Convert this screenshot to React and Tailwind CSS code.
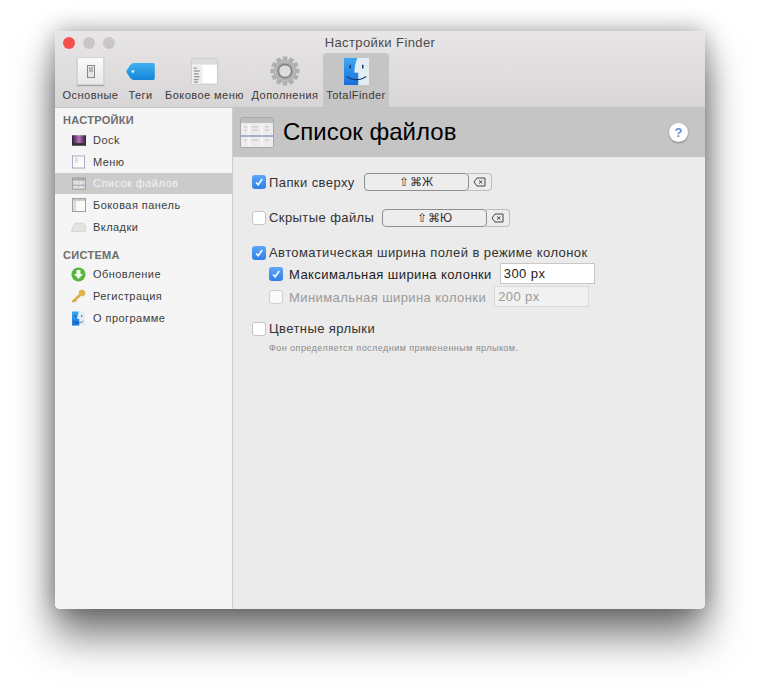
const FONT = "font-['Liberation_Sans',Arial,sans-serif]";

function Check({ on, dim }) {
  return (
    <span className={`flex h-[14px] w-[14px] shrink-0 items-center justify-center rounded-[3px] ${on ? "bg-gradient-to-b from-[#5ea6f7] to-[#2f7fe8]" : "border border-[#c4c4c4] bg-white"} ${dim ? "opacity-70" : ""}`}>
      {on && (
        <svg width="10" height="10" viewBox="0 0 10 10" fill="none">
          <path d="M2 5.400 4.200 7.800 8.200 2" stroke="white" strokeWidth="1.500" />
        </svg>
      )}
    </span>
  );
}

function Shortcut({ keys }) {
  return (
    <div className="flex h-[18px] w-[128px] text-[12px] text-[#333]">
      <div className="z-10 flex w-[105px] items-center justify-center rounded-[4px] border border-[#8f8f8f] bg-[#ededed]">{keys}</div>
      <div className="-ml-px flex flex-1 items-center justify-center rounded-r-[4px] border border-l-0 border-[#bdbdbd] bg-[#ededed]">
        <svg width="13" height="10" viewBox="0 0 13 10" fill="none" stroke="#444" strokeWidth="1">
          <path d="M4 1h8v8H4L1 5z" />
          <path d="M6 3.400 9.400 6.600M9.400 3.400 6 6.600" />
        </svg>
      </div>
    </div>
  );
}

function SwitchIcon() {
  return (
    <div className="flex h-[28px] w-[27px] items-center justify-center border border-[#d4d4d4] bg-gradient-to-b from-[#fbfbfb] to-[#e8e8e8] shadow-[0_1px_1px_rgba(0,0,0,.25)]">
      <div className="flex h-[13px] w-[8px] items-start justify-center border border-[#888] bg-[#e5e5e5] pt-[1px]">
        <div className="h-[5px] w-[4px] bg-[#b5b5b5]" />
      </div>
    </div>
  );
}

function TagIcon() {
  return (
    <svg width="31" height="19" viewBox="0 0 32 20">
      <defs><linearGradient id="tg" x1="0" y1="0" x2="0" y2="1"><stop offset="0" stopColor="#3fb0f0" /><stop offset="1" stopColor="#1585d8" /></linearGradient></defs>
      <path d="M9 1h20a2 2 0 0 1 2 2v14a2 2 0 0 1-2 2H9C6 19 3 14 1 10 3 6 6 1 9 1z" fill="url(#tg)" />
      <circle cx="8" cy="10" r="1.500" fill="#d8f0ff" />
    </svg>
  );
}

function SideMenuIcon() {
  return (
    <svg width="29" height="28" viewBox="0 0 30 28">
      <rect x="1.500" y="1" width="27" height="26.500" rx="1" fill="#fff" stroke="#c8c8c8" />
      <rect x="2" y="1.500" width="26" height="6" fill="#dedede" />
      <rect x="2" y="8" width="11" height="19" fill="#eeeeee" />
      <path d="M4 11h3M4 14h6M4 17h5M4 20h6M4 23h5M4 25.500h4" stroke="#777" strokeWidth="1" />
    </svg>
  );
}

function GearIcon() {
  const teeth = Array.from({ length: 12 }, (_, i) => i * 30);
  return (
    <svg width="32" height="30" viewBox="0 0 34 32">
      <g fill="#b0b0b0">
        {teeth.map((a) => (
          <rect key={a} x="14.500" y="0.500" width="5" height="6" transform={`rotate(${a} 17 16)`} />
        ))}
      </g>
      <circle cx="17" cy="16" r="12" fill="#ababab" />
      <circle cx="17" cy="16" r="10.500" fill="none" stroke="#c6c6c6" strokeWidth="1" />
      <circle cx="17" cy="16" r="7" fill="#dedcdd" stroke="#7f7f7f" strokeWidth="1.500" />
    </svg>
  );
}

function FinderIcon({ size = 25, h = 27 }) {
  return (
    <svg width={size} height={h} viewBox="0 0 26 28">
      <defs><linearGradient id="fb" x1="0" y1="0" x2="0" y2="1"><stop offset="0" stopColor="#3fa7f2" /><stop offset="1" stopColor="#1670dc" /></linearGradient></defs>
      <path d="M0 0h14c-2 5-3 10-3 15h4v13H0z" fill="url(#fb)" />
      <path d="M14 0h12v28H15V15h-4c0-5 1-10 3-15z" fill="#e4edf6" />
      <path d="M6.500 7v4M19.500 7v4" stroke="#143a66" strokeWidth="1.600" />
      <path d="M3 19c5 4.500 15 4.500 20 0" stroke="#143a66" strokeWidth="1.200" fill="none" />
    </svg>
  );
}

function Tab({ label, children, w, active, ml }) {
  return (
    <div className={`flex h-[54px] flex-col items-center justify-end pb-[5px] ${w} ${ml} ${active ? "rounded-t-[4px] bg-[#c6c5c5]" : ""}`}>
      <div className="flex h-[32px] items-center justify-center">{children}</div>
      <div className="mt-[1px] whitespace-nowrap text-[11px] leading-[14px] tracking-[0.45px] text-[#3a3a3a]">{label}</div>
    </div>
  );
}

const icons = {
  dock: (
    <svg width="14" height="11" viewBox="0 0 16 12"><defs><linearGradient id="dk" x1="0" y1="0" x2="1" y2="0"><stop offset="0" stopColor="#2c1a44" /><stop offset=".5" stopColor="#b872b0" /><stop offset="1" stopColor="#2c1a44" /></linearGradient></defs><rect width="16" height="10" fill="url(#dk)" /><rect y="9" width="16" height="3" fill="#333" /></svg>
  ),
  menu: (
    <svg width="13" height="14" viewBox="0 0 14 14"><rect x=".5" y=".5" width="13" height="13" fill="#fafafa" stroke="#a3a7bb" /><path d="M3 3h3M3 5h4M3 7h3" stroke="#c5c5d2" /></svg>
  ),
  list: (
    <svg width="14" height="13" viewBox="0 0 16 14"><rect x=".5" y=".5" width="15" height="13" fill="#d9d9d9" stroke="#9c9c9c" /><rect x="1" y="1" width="14" height="2.500" fill="#a5a5a5" /><path d="M5 4v8M10 4v8" stroke="#f2f2f2" /><path d="M1 9h14" stroke="#8f97bb" /></svg>
  ),
  panel: (
    <svg width="14" height="14" viewBox="0 0 15 15"><rect x=".5" y=".5" width="14" height="14" fill="#fafafa" stroke="#999" /><rect x="1" y="1" width="13" height="2" fill="#c5c5c5" /><rect x="1" y="3" width="3.500" height="11" fill="#dcdcdc" /></svg>
  ),
  tabs: (
    <svg width="15" height="10" viewBox="0 0 16 10"><path d="M0 10 3 3C3.500 1 5 1 6 1h7c1 0 1.500 1 2 3l1 6z" fill="#e2e2e2" stroke="#c4c4c4" strokeWidth=".6" /></svg>
  ),
  update: (
    <svg width="15" height="15" viewBox="0 0 15 15"><circle cx="7.500" cy="7.500" r="7" fill="#58b53c" /><path d="M5.500 3h4v4h2.500l-4.500 5L3 7h2.500z" fill="#f4f8f0" /></svg>
  ),
  key: (
    <svg width="15" height="15" viewBox="0 0 15 15"><circle cx="11" cy="4" r="3.200" fill="#e0b64c" /><path d="M9 6 1.500 13" stroke="#d6a945" strokeWidth="2.400" /><path d="M4 11l1.500 1.500" stroke="#d6a945" strokeWidth="1.500" /></svg>
  ),
  about: <FinderIcon size={13} h={15} />,
};

function SideItem({ icon, label, selected }) {
  return (
    <div className={`flex h-[21.700px] items-center ${selected ? "bg-[#cbcbcb] text-[#f2f2fa]" : "text-[#3c3c3c]"}`}>
      <div className="flex w-[38px] shrink-0 items-center justify-center pl-[9px]">{icons[icon]}</div>
      <div className="text-[11px] tracking-[0.45px]">{label}</div>
    </div>
  );
}

export default function App() {
  return (
    <div className={`h-[688px] w-[760px] overflow-hidden bg-white pl-[55px] pt-[31px] ${FONT}`}>
      <div className="flex h-[578px] w-[650px] flex-col overflow-hidden rounded-[5px] shadow-[0_28px_40px_rgba(0,0,0,0.5),0_0_24px_rgba(0,0,0,0.35)]">
        <div className="h-[76px] shrink-0 bg-gradient-to-b from-[#e9e6e7] to-[#d8d5d6]">
          <div className="relative flex h-[22px] items-center justify-center pt-[2px] text-[13px] tracking-[0.4px] text-[#4a4a4a]">
            <div className="absolute left-[8px] top-[6px] flex gap-[8px]">
              <span className="h-[12px] w-[12px] rounded-full bg-[#f5504e]" />
              <span className="h-[12px] w-[12px] rounded-full bg-[#c8c6c7]" />
              <span className="h-[12px] w-[12px] rounded-full bg-[#c8c6c7]" />
            </div>
            Настройки Finder
          </div>
          <div className="flex">
            <Tab label="Основные" w="w-[55px]" ml="ml-[8px]"><SwitchIcon /></Tab>
            <Tab label="Теги" w="w-[27px]" ml="ml-[9px]"><TagIcon /></Tab>
            <Tab label="Боковое меню" w="w-[79px]" ml="ml-[11px]"><SideMenuIcon /></Tab>
            <Tab label="Дополнения" w="w-[66px]" ml="ml-[8px]"><GearIcon /></Tab>
            <Tab label="TotalFinder" w="w-[66px]" ml="ml-[5px]" active><FinderIcon /></Tab>
          </div>
        </div>

        <div className="flex min-h-0 flex-1 border-t border-[#c2c2c2]">
          <aside className="w-[178px] shrink-0 border-r border-[#cfcfcf] bg-[#f5f5f5] pt-[5px]">
            <div className="h-[14px] pl-[8px] text-[11px] font-bold leading-[14px] tracking-[0.3px] text-[#6e6e6e]">НАСТРОЙКИ</div>
            <div className="mt-[2.400px]">
              <SideItem icon="dock" label="Dock" />
              <SideItem icon="menu" label="Меню" />
              <SideItem icon="list" label="Список файлов" selected />
              <SideItem icon="panel" label="Боковая панель" />
              <SideItem icon="tabs" label="Вкладки" />
            </div>
            <div className="mt-[10px] h-[14px] pl-[8px] text-[11px] font-bold leading-[14px] tracking-[0.3px] text-[#6e6e6e]">СИСТЕМА</div>
            <div className="mt-[2px]">
              <SideItem icon="update" label="Обновление" />
              <SideItem icon="key" label="Регистрация" />
              <SideItem icon="about" label="О программе" />
            </div>
          </aside>

          <main className="min-w-0 flex-1 bg-[#ebebeb]">
            <header className="flex h-[49px] items-center bg-[#c5c5c5] pl-[7px] pr-[17px]">
              <svg width="34" height="31" viewBox="0 0 34 31">
                <rect x=".5" y=".5" width="33" height="30" rx="1" fill="#ececec" stroke="#a8a8a8" />
                <rect x="1" y="1" width="32" height="5" fill="#bcbcbc" />
                <path d="M9 7v22M22 7v22" stroke="#fafafa" strokeWidth="1.500" />
                <path d="M1 19h32" stroke="#8f9ac4" strokeWidth="1.500" />
                <path d="M4 10h3M4 13h3M12 10h6M12 13h6M25 10h4M25 13h4M4 23h3M12 23h6M25 23h4" stroke="#c2c2cc" />
              </svg>
              <h1 className="-mt-[2px] ml-[9px] flex-1 text-[24px] leading-none text-black">Список файлов</h1>
              <div className="flex h-[19px] w-[19px] items-center justify-center rounded-full bg-white text-[13px] font-bold text-[#5f8fd4] shadow-[0_1px_2px_rgba(0,0,0,.35)]">?</div>
            </header>

            <div className="pl-[19px] pt-[16px] text-[13px] tracking-[0.42px] text-[#333]">
              <div className="flex h-[18px] items-center">
                <Check on />
                <span className="ml-[3px] mr-[9px] pt-[2px]">Папки сверху</span>
                <Shortcut keys="⇧⌘Ж" />
              </div>
              <div className="mt-[18px] flex h-[18px] items-center">
                <Check />
                <span className="ml-[3px] mr-[8px]">Скрытые файлы</span>
                <Shortcut keys="⇧⌘Ю" />
              </div>
              <div className="mt-[16px] flex h-[20px] items-center">
                <Check on />
                <span className="ml-[3px]">Автоматическая ширина полей в режиме колонок</span>
              </div>
              <div className="ml-[17px] flex h-[21px] items-center">
                <Check on />
                <span className="ml-[6px] pt-[2px] text-[#222]">Максимальная ширина колонки</span>
                <div className="ml-[8px] flex h-[21px] w-[95px] items-center border border-[#c8c8c8] bg-white pl-[3px] pt-[1px] text-[#222]">300 px</div>
              </div>
              <div className="ml-[17px] mt-[2px] flex h-[21px] items-center text-[#9a9a9a]">
                <Check dim />
                <span className="ml-[6px] pt-[2px]">Минимальная ширина колонки</span>
                <div className="ml-[8px] flex h-[21px] w-[95px] items-center border border-[#dadada] bg-[#f1f1f1] pl-[3px] pt-[1px]">200 px</div>
              </div>
              <div className="mt-[12px] flex h-[20px] items-center">
                <Check />
                <span className="ml-[3px]">Цветные ярлыки</span>
              </div>
              <div className="ml-[17px] mt-[2px] text-[9px] leading-[14px] tracking-[0.45px] text-[#8a8a8a]">Фон определяется последним примененным ярлыком.</div>
            </div>
          </main>
        </div>
      </div>
    </div>
  );
}
